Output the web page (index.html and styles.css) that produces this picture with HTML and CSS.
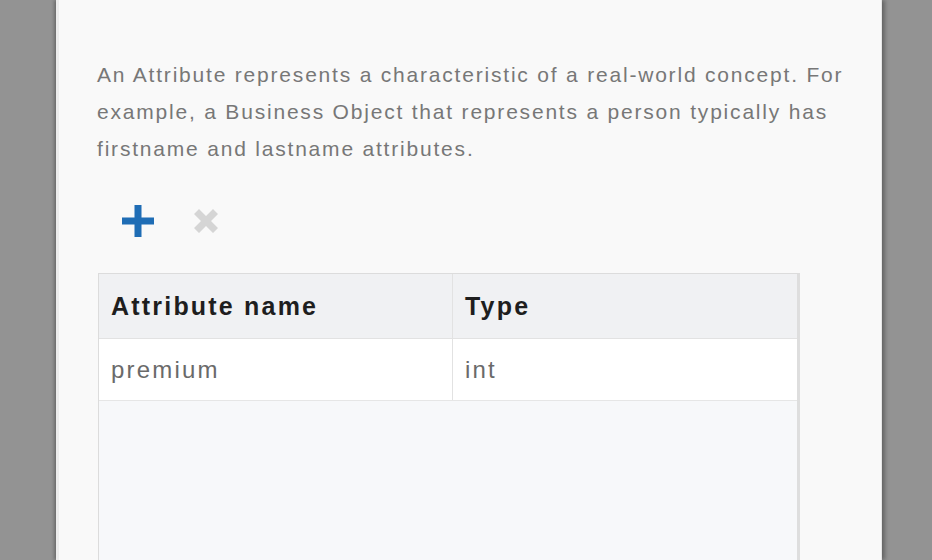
FILE: index.html
```html
<!DOCTYPE html>
<html>
<head>
<meta charset="utf-8">
<link rel="stylesheet" href="styles.css">
</head>
<body>
<div class="page">
  <div class="dialog">
    <p class="desc">An Attribute represents a characteristic of a real-world concept. For example, a Business Object that represents a person typically has firstname and lastname attributes.</p>
    <div class="toolbar">
      <button class="tool add" title="Add">
        <svg width="36" height="36" viewBox="0 0 36 36"><path d="M14.5 2h7v12.5H34v7H21.5V34h-7V21.5H2v-7h12.5z" fill="#1f6db5"/></svg>
      </button>
      <button class="tool remove" title="Remove">
        <svg width="36" height="36" viewBox="0 0 36 36"><path d="M6 11l5-5 7 7 7-7 5 5-7 7 7 7-5 5-7-7-7 7-5-5 7-7z" fill="#d5d5d5"/></svg>
      </button>
    </div>
    <div class="grid">
      <div class="row head">
        <div class="cell c1">Attribute name</div>
        <div class="cell c2">Type</div>
      </div>
      <div class="row data">
        <div class="cell c1">premium</div>
        <div class="cell c2">int</div>
      </div>
      <div class="empty"></div>
    </div>
  </div>
</div>
</body>
</html>
```
FILE: styles.css
```css
html, body {
  margin: 0;
  padding: 0;
  height: 100%;
  overflow: hidden;
}
body {
  background: #939393;
  font-family: "Liberation Sans", Arial, sans-serif;
}
.page {
  display: flex;
  padding-left: 56px;
  height: 100%;
}
.dialog {
  width: 826px;
  height: 560px;
  overflow: hidden;
  background: #f9f9f9;
  box-shadow: -2px 0 3px rgba(0,0,0,0.25), 3px 0 4px rgba(0,0,0,0.3);
  border-left: 3px solid #ececec;
  border-right: 1px solid #e6e6e6;
  box-sizing: border-box;
  padding: 56px 0 0 38px;
}
.desc {
  margin: 0;
  width: 770px;
  font-size: 21px;
  letter-spacing: 1.8px;
  line-height: 37px;
  color: #777777;
}
.toolbar {
  display: flex;
  gap: 32px;
  margin: 36px 0 0 23px;
}
.tool {
  border: 0;
  background: transparent;
  padding: 0;
  width: 36px;
  height: 36px;
  display: flex;
}
.grid {
  margin-top: 34px;
  margin-left: 1px;
  width: 702px;
  border: 1px solid #dcdcdc;
  border-right: 3px solid #dedede;
  box-sizing: border-box;
  background: #f7f8fa;
}
.row {
  display: flex;
}
.head {
  height: 64px;
  background: #f0f1f3;
  border-bottom: 1px solid #e2e2e2;
  font-weight: bold;
  color: #1e1e1e;
}
.head .cell {
  font-size: 25px;
  letter-spacing: 2.2px;
}
.data {
  height: 61px;
  background: #ffffff;
  border-bottom: 1px solid #e6e6e6;
  color: #6a6a6a;
}
.data .cell {
  font-size: 24px;
  letter-spacing: 2.2px;
}
.cell {
  display: flex;
  align-items: center;
  box-sizing: border-box;
}
.c1 {
  width: 354px;
  padding-left: 12px;
  border-right: 1px solid #e2e2e2;
}
.c2 {
  flex: 1;
  padding-left: 12px;
}
.empty {
  height: 300px;
}
```
